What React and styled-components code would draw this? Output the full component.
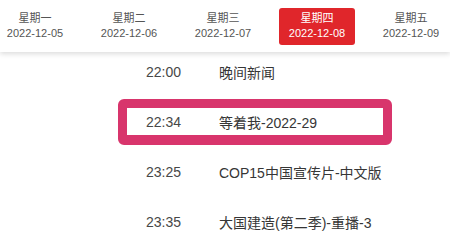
import styled, { createGlobalStyle } from "styled-components";

const GlobalStyle = createGlobalStyle`
  body {
    margin: 0;
    background: #ffffff;
    font-family: "Liberation Sans", "Noto Sans CJK SC", sans-serif;
    overflow: hidden;
  }
`;

const Page = styled.div`
  width: 450px;
  height: 244px;
  overflow: hidden;
  background: #fff;
`;

const DayBar = styled.div`
  position: relative;
  z-index: 1;
  height: 52px;
  background: #fff;
  box-shadow: 0 2px 5px rgba(0, 0, 0, 0.14);
  overflow: hidden;
`;

const DayTrack = styled.div`
  display: flex;
  margin-left: -12px;
  height: 100%;
`;

const Day = styled.div`
  flex: 0 0 94px;
  display: flex;
  align-items: center;
  justify-content: center;
`;

const DayLabel = styled.div`
  width: 76px;
  height: 37px;
  border-radius: 3px;
  display: flex;
  flex-direction: column;
  align-items: center;
  justify-content: center;
  font-size: 11px;
  line-height: 15px;
  color: ${({ $active }) => ($active ? "#fff" : "#555")};
  background: ${({ $active }) => ($active ? "#e0262b" : "transparent")};
`;

const List = styled.div`
  margin: -3px 0 0 118px;
  width: 274px;
  display: flex;
  flex-direction: column;
  gap: 4px;
`;

const Row = styled.div`
  box-sizing: border-box;
  height: 46px;
  display: flex;
  align-items: center;
  padding-left: 19px;
  border: 9px solid ${({ $marked }) => ($marked ? "#d8356c" : "transparent")};
  border-bottom-width: 10px;
  border-radius: 6px;
  font-size: 14px;
`;

const Time = styled.span`
  width: 73px;
  color: #474747;
`;

const Title = styled.span`
  color: #363636;
  white-space: nowrap;
`;

const days = [
  { name: "星期一", date: "2022-12-05" },
  { name: "星期二", date: "2022-12-06" },
  { name: "星期三", date: "2022-12-07" },
  { name: "星期四", date: "2022-12-08", active: true },
  { name: "星期五", date: "2022-12-09" },
];

const shows = [
  { time: "22:00", title: "晚间新闻" },
  { time: "22:34", title: "等着我-2022-29", marked: true },
  { time: "23:25", title: "COP15中国宣传片-中文版" },
  { time: "23:35", title: "大国建造(第二季)-重播-3" },
];

const App = () => {
  return (
    <>
      <GlobalStyle />
      <Page>
        <DayBar>
          <DayTrack>
            {days.map((d) => (
              <Day key={d.date}>
                <DayLabel $active={d.active}>
                  <div>{d.name}</div>
                  <div>{d.date}</div>
                </DayLabel>
              </Day>
            ))}
          </DayTrack>
        </DayBar>
        <List>
          {shows.map((s) => (
            <Row key={s.time} $marked={s.marked}>
              <Time>{s.time}</Time>
              <Title>{s.title}</Title>
            </Row>
          ))}
        </List>
      </Page>
    </>
  );
};

export default App;
